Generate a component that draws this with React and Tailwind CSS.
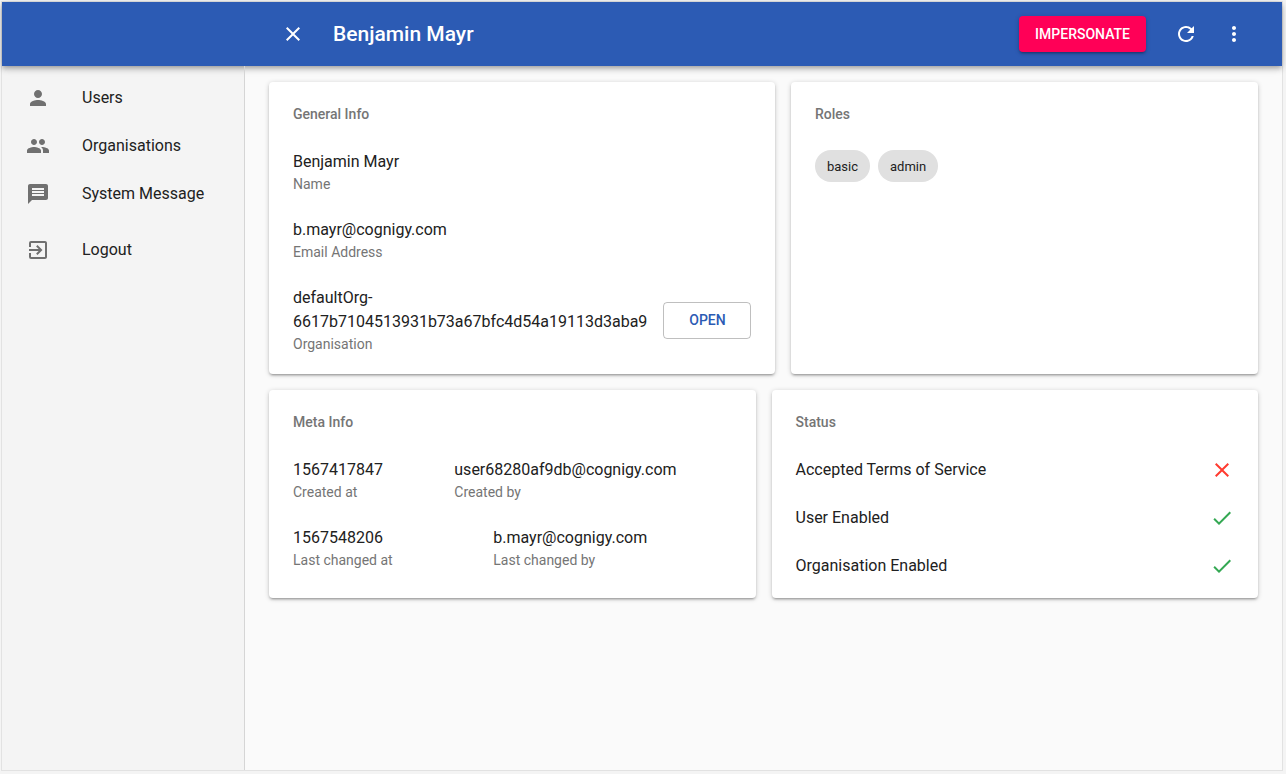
import React from "react";
import { MdClose, MdRefresh, MdMoreVert, MdPerson, MdPeople, MdMessage, MdExitToApp, MdCheck } from "react-icons/md";

const CARD =
  "rounded-[4px] bg-white p-6 shadow-[0px_1px_5px_0px_rgba(0,0,0,0.2),0px_2px_2px_0px_rgba(0,0,0,0.14),0px_3px_1px_-2px_rgba(0,0,0,0.12)]";

const BAR =
  "flex shrink-0 items-center bg-[#2c5bb4] text-white shadow-[0px_2px_4px_-1px_rgba(0,0,0,0.2),0px_4px_5px_0px_rgba(0,0,0,0.14),0px_1px_10px_0px_rgba(0,0,0,0.12)]";

function NavItem({ icon: Icon, label }) {
  return (
    <a className="flex h-12 items-center px-6">
      <Icon className="size-6 shrink-0 text-[#707070]" />
      <span className="ml-8 text-base whitespace-nowrap">{label}</span>
    </a>
  );
}

function CardTitle({ children }) {
  return <h2 className="h-4 text-sm/4 font-medium text-[#757575]">{children}</h2>;
}

function Field({ value, label }) {
  return (
    <div className="min-w-0">
      <div className="text-base/6">{value}</div>
      <div className="text-sm/5 text-[#757575]">{label}</div>
    </div>
  );
}

function StatusRow({ label, ok }) {
  return (
    <div className="flex h-12 items-center justify-between">
      <span className="text-base/6">{label}</span>
      {ok ? <MdCheck className="size-6 text-[#34a853]" /> : <MdClose className="size-6 text-[#ff3b30]" />}
    </div>
  );
}

export default function App() {
  return (
    <div className="h-[774px] w-[1286px] bg-[#f4f4f4] pt-px pl-px font-['Roboto','Liberation_Sans',sans-serif] text-[#212121]">
      <div className="flex h-[770px] w-[1282px] flex-col border border-[#e2e2e2] bg-[#fafafa]">
        <header className={BAR + " relative z-10 h-16 pr-6 pl-[279px]"}>
          <MdClose className="size-6" />
          <h1 className="ml-7 grow pt-0.5 text-[21px] font-medium">Benjamin Mayr</h1>
          <button className="h-9 rounded-[4px] bg-[#ff0057] px-4 text-sm font-medium shadow-[0px_1px_5px_0px_rgba(0,0,0,0.2),0px_2px_2px_0px_rgba(0,0,0,0.14),0px_3px_1px_-2px_rgba(0,0,0,0.12)]">
            IMPERSONATE
          </button>
          <MdRefresh className="ml-7 size-6" />
          <MdMoreVert className="mr-3 ml-6 size-6" />
        </header>
        <div className="flex min-h-0 grow">
          <nav className="w-[242px] shrink-0 bg-[#f4f4f4] pt-2">
            <NavItem icon={MdPerson} label="Users" />
            <NavItem icon={MdPeople} label="Organisations" />
            <NavItem icon={MdMessage} label="System Message" />
            <div className="h-2" />
            <NavItem icon={MdExitToApp} label="Logout" />
          </nav>
          <div className="relative z-20 w-px shrink-0 bg-[#d5d5d5]" />
          <main className="flex grow flex-col gap-4 px-6 pt-4">
            <div className="flex h-[292px] gap-4">
              <section className={CARD + " w-[506px]"}>
                <CardTitle>General Info</CardTitle>
                <div className="mt-7 flex flex-col gap-6">
                  <Field value="Benjamin Mayr" label="Name" />
                  <Field value="b.mayr@cognigy.com" label="Email Address" />
                  <div className="flex items-center justify-between">
                    <Field
                      value={<>defaultOrg-<br />6617b7104513931b73a67bfc4d54a19113d3aba9</>}
                      label="Organisation"
                    />
                    <button className="mt-px h-[37px] w-[88px] shrink-0 rounded-[4px] border border-black/25 pb-px pl-px text-sm font-medium text-[#2c5bb4]">
                      OPEN
                    </button>
                  </div>
                </div>
              </section>
              <section className={CARD + " grow"}>
                <CardTitle>Roles</CardTitle>
                <div className="mt-7 flex gap-2 text-[13px]">
                  <span className="flex h-8 items-center rounded-full bg-[#e0e0e0] px-3 pt-px">basic</span>
                  <span className="flex h-8 items-center rounded-full bg-[#e0e0e0] px-3 pt-px">admin</span>
                </div>
              </section>
            </div>
            <div className="grid h-[208px] grid-cols-2 grid-rows-[208px] gap-4">
              <section className={CARD}>
                <CardTitle>Meta Info</CardTitle>
                <div className="mt-7 flex flex-col gap-6">
                  <div className="flex">
                    <div className="w-[161.3px]"><Field value="1567417847" label="Created at" /></div>
                    <Field value="user68280af9db@cognigy.com" label="Created by" />
                  </div>
                  <div className="flex">
                    <div className="w-[200.3px]"><Field value="1567548206" label="Last changed at" /></div>
                    <Field value="b.mayr@cognigy.com" label="Last changed by" />
                  </div>
                </div>
              </section>
              <section className={CARD}>
                <CardTitle>Status</CardTitle>
                <div className="mt-4">
                  <StatusRow label="Accepted Terms of Service" />
                  <StatusRow label="User Enabled" ok />
                  <StatusRow label="Organisation Enabled" ok />
                </div>
              </section>
            </div>
          </main>
        </div>
      </div>
    </div>
  );
}
